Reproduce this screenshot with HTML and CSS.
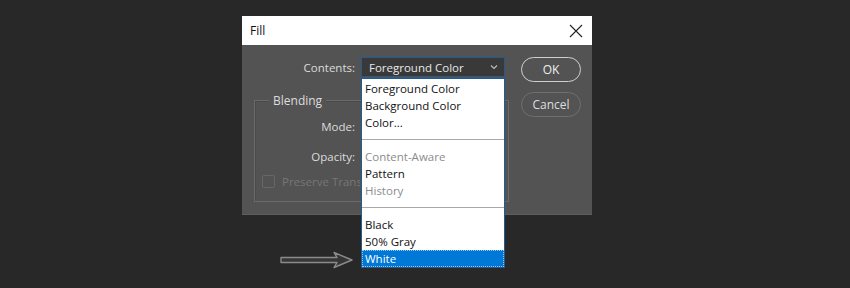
FILE: index.html
```html
<!DOCTYPE html>
<html lang="en">
<head>
    <meta charset="UTF-8">
    <meta name="viewport" content="width=device-width, initial-scale=1.0">
    <title>Fill</title>
    <link rel="stylesheet" href="styles.css">
</head>
<body>
    <div class="dialog">
        <div class="titlebar">
            <span class="title">Fill</span>
            <svg class="close" width="14" height="14" viewBox="0 0 14 14">
                <path d="M1 1 L13 13 M13 1 L1 13" stroke="#222" stroke-width="1.1" fill="none"/>
            </svg>
        </div>
        <div class="body">
            <div class="form">
                <div class="row">
                    <span class="label">Contents:</span>
                    <div class="select">
                        <span>Foreground Color</span>
                        <svg width="8" height="6" viewBox="0 0 8 6"><path d="M1 1.5 L4 4.5 L7 1.5" stroke="#bbb" stroke-width="1.2" fill="none"/></svg>
                    </div>
                </div>
                <div class="group">
                    <span class="legend">Blending</span>
                    <div class="row group-row mode"><span class="label">Mode:</span></div>
                    <div class="row group-row opacity"><span class="label">Opacity:</span></div>
                    <div class="check-row">
                        <span class="checkbox"></span>
                        <span class="check-label">Preserve Transparency</span>
                    </div>
                </div>
            </div>
            <div class="buttons">
                <button class="btn btn-default">OK</button>
                <button class="btn">Cancel</button>
            </div>
        </div>

        <ul class="menu">
            <li>Foreground Color</li>
            <li>Background Color</li>
            <li>Color...</li>
            <li class="sep"></li>
            <li class="disabled">Content-Aware</li>
            <li>Pattern</li>
            <li class="disabled">History</li>
            <li class="sep"></li>
            <li>Black</li>
            <li>50% Gray</li>
            <li class="selected">White</li>
        </ul>
    </div>

    <div class="pointer">
        <svg width="76" height="22" viewBox="0 0 76 22">
            <path d="M2 8.5 H58 L55 3.5 L73 11 L55 18.5 L58 13.5 H2 Z" stroke="#8a8a8a" stroke-width="1.4" fill="#363636" stroke-linejoin="round"/>
        </svg>
    </div>
</body>
</html>
```

FILE: styles.css
```css
body { margin: 0; background: #282828; font-family: "Open Sans", "Noto Sans", sans-serif; font-size: 11.5px; height: 288px; overflow: hidden; }

.dialog { position: relative; width: 350px; margin: 16px 0 0 242px; background: #535353; box-shadow: 0 1px 0 #5e5e5e; }
.titlebar { height: 29px; background: #fff; display: flex; align-items: center; justify-content: space-between; padding: 0 9px 0 8px; }
.title { color: #111; font-size: 12px; }
.close { display: block; }

.body { display: flex; gap: 12px; padding: 12px 0 12px 12px; height: 145px; }
.form { width: 255px; }
.row { display: flex; align-items: center; height: 20px; }
.label { width: 101px; text-align: right; color: #dcdcdc; margin-right: 6px; }
.select { height: 18px; border: 1px solid #245a92; background: #393939; color: #e8e8e8; display: flex; align-items: center; justify-content: space-between; padding: 0 6px 0 7px; box-sizing: content-box; width: 129px; }
.select svg { display: block; }

.group { position: relative; margin-top: 23px; height: 100px; border: 1px solid #6a6a6a; box-shadow: inset 1px 1px 0 #4a4a4a; }
.legend { position: absolute; top: -9px; left: 14px; padding: 0 4px; background: #535353; color: #dcdcdc; font-size: 12px; }
.group-row .label { width: 100px; }
.mode { margin-top: 15px; }
.opacity { margin-top: 10px; }
.check-row { display: flex; align-items: center; gap: 7px; margin: 8px 0 0 7px; }
.checkbox { width: 11px; height: 11px; border: 1px solid #676767; border-radius: 2px; }
.check-label { color: #767676; white-space: nowrap; width: 78px; overflow: hidden; }

.buttons { display: flex; flex-direction: column; gap: 10px; }
.btn { width: 60px; height: 25px; border-radius: 13px; border: 1.5px solid #6f6f6f; background: transparent; color: #dedede; font: inherit; font-size: 12px; padding: 0; }
.btn-default { border-color: #cfcfcf; color: #f0f0f0; }

.menu { position: absolute; left: 119px; top: 62px; width: 142px; margin: 0; padding: 1px 0 0; list-style: none; background: #fff; border: 1px solid #245a92; }
.menu li { height: 17px; line-height: 17px; padding-left: 3px; color: #111; }
.menu li.disabled { color: #8c8c8c; }
.menu li.sep { position: relative; }
.menu li.sep::after { content: ""; position: absolute; left: 0; right: 0; top: 8px; border-top: 1px solid #a8a8a8; }
.menu li.selected { background: #0078d7; color: #fff; outline: 1px dotted #9cc8f0; outline-offset: -1px; }

.pointer { margin: 35px 0 0 279px; }
.pointer svg { display: block; }
```
